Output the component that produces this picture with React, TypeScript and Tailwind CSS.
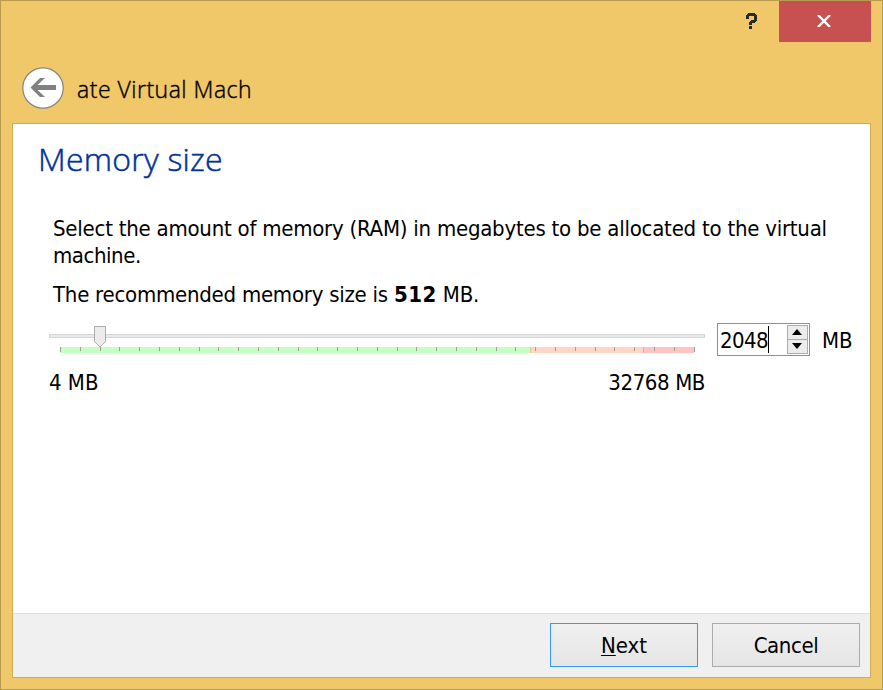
import React from "react";

const TICKS = Array.from({ length: 33 }, (_, i) => Math.round(i * 19.8));

function TitleBar() {
  return (
    <header className="flex h-[122px] flex-col">
      <div className="flex h-[41px] justify-end pr-[11px]">
        <button className="flex w-[56px] items-start justify-center pt-3" aria-label="Help">
          <svg width="11" height="16" viewBox="0 0 11 16" fill="#2a2a2a" shapeRendering="crispEdges">
            <rect x="2" y="0" width="7" height="3" />
            <rect x="1" y="1" width="9" height="2" />
            <rect x="0" y="2" width="3" height="4" />
            <rect x="8" y="2" width="3" height="6" />
            <rect x="5" y="7" width="5" height="2" />
            <rect x="4" y="8" width="5" height="2" />
            <rect x="3" y="9" width="3" height="3" />
            <rect x="3" y="13" width="3" height="3" />
          </svg>
        </button>
        <button className="flex w-[92px] items-start justify-center bg-[#c75050] pt-[14px]" aria-label="Close">
          <svg className="-ml-[2px]" width="14" height="12" viewBox="0 0 14 12" stroke="#fff" strokeWidth="2.4">
            <path d="M1 0L13 12M13 0L1 12" />
          </svg>
        </button>
      </div>
      <div className="flex pl-[21px] pt-[25px]">
        <svg width="42" height="42" viewBox="0 0 42 42">
          <circle cx="21" cy="21" r="20.2" fill="#fff" stroke="#85827c" strokeWidth="1.2" />
          <path d="M8.500 20.500L18 11h5l-7.500 7H34v5H15.500l7.500 7h-5z" fill="#808080" />
        </svg>
        <span className="ml-[13px] mt-[6px] whitespace-nowrap font-['Open_Sans',sans-serif] text-[23px] font-light leading-[32px] tracking-[0.5px] text-black [-webkit-text-stroke:0.4px_#000] [font-stretch:normal]">
          ate Virtual Mach
        </span>
      </div>
    </header>
  );
}

function MemorySlider() {
  return (
    <div className="w-[656px]">
      <svg className="block" width="656" height="32" viewBox="0 0 656 32" shapeRendering="crispEdges">
        <rect x="0.5" y="11.500" width="655" height="3" fill="#e7eaea" stroke="#d6d6d6" />
        <rect x="11" y="24" width="470" height="6" fill="#c3ffc3" />
        <rect x="481" y="24" width="113" height="6" fill="#ffd6c3" />
        <rect x="594" y="24" width="51" height="6" fill="#ffc3c3" />
        <rect x="481" y="24" width="1" height="6" fill="#e1cb91" />
        <rect x="594" y="24" width="1" height="6" fill="#ff9f8c" />
        {TICKS.map((x) => (
          <rect key={x} x={11 + x} y="24" width="1" height={x === 0 || x === 634 ? 5 : 4} fill="#a0a08c" />
        ))}
        <path d="M45.500 3.500h11v15l-5.500 5.500-5.500-5.500z" fill="#ececec" stroke="#acacac" shapeRendering="auto" />
      </svg>
      <div className="mt-[14px] flex justify-between leading-7">
        <span>4 MB</span>
        <span className="tracking-[-0.4px]">32768 MB</span>
      </div>
    </div>
  );
}

function MemoryInput() {
  return (
    <div className="flex h-[33px] w-[93px] border border-[#569de5] bg-white pl-[2px]">
      <span className="mt-[3px] w-[48px] whitespace-nowrap leading-7 tracking-[-0.55px]">2048</span>
      <span className="mt-[2px] h-[27px] w-px bg-black" />
      <div className="ml-[18px] mt-[1px] flex h-[29px] w-[21px] flex-col border border-[#acacac] bg-[#ececec]">
        <button className="flex h-[14px] items-center justify-center border-b border-[#acacac] pb-px pr-px" aria-label="Increase">
          <svg width="10" height="6" viewBox="0 0 10 6"><path d="M0 6L5 0l5 6z" /></svg>
        </button>
        <button className="flex h-[13px] items-center justify-center pb-px pr-px" aria-label="Decrease">
          <svg width="10" height="6" viewBox="0 0 10 6"><path d="M0 0L5 6l5-6z" /></svg>
        </button>
      </div>
    </div>
  );
}

export default function App() {
  return (
    <div className="h-[690px] w-[883px] overflow-hidden border border-[#b89a51] bg-[#f0c869] font-['DejaVu_Sans_Condensed','DejaVu_Sans',sans-serif] text-[22px] text-black [font-stretch:condensed]">
      <TitleBar />
      <main className="ml-[11px] flex h-[555px] w-[859px] flex-col border border-[#cbaa5b] bg-white">
        <section className="h-[489px] pl-9 pt-[14px]">
          <h1 className="-ml-[11px] h-[42px] whitespace-nowrap font-['Open_Sans',sans-serif] text-[32px] font-light leading-[42px] tracking-[0.25px] text-[#003399] [-webkit-text-stroke:0.5px_#003399] [font-stretch:normal]">
            Memory size
          </h1>
          <p className="ml-1 mt-[35px] whitespace-nowrap leading-[27px] tracking-[-0.236px]">
            Select the amount of memory (RAM) in megabytes to be allocated to the virtual
            <br />
            <span className="tracking-[-0.45px]">machine.</span>
          </p>
          <p className="ml-1 mt-3 whitespace-nowrap leading-[27px] tracking-[-0.245px]">
            The recommended memory size is <b className="tracking-[0.5px]">512</b> MB.
          </p>
          <div className="mt-[15px] flex items-start">
            <MemorySlider />
            <div className="ml-3"><MemoryInput /></div>
            <span className="ml-3 mt-1 whitespace-nowrap leading-7">MB</span>
          </div>
        </section>
        <footer className="flex flex-1 justify-end gap-[14px] border-t border-[#dfdfdf] bg-[#f0f0f0] pr-[10px] pt-[9px]">
          <button className="h-[44px] w-[148px] border border-[#3399ff] bg-linear-to-b from-[#f0f0f0] to-[#e5e5e5]">
            <span className="underline decoration-1 underline-offset-2">N</span>ext
          </button>
          <button className="h-[44px] w-[148px] border border-[#acacac] bg-linear-to-b from-[#f0f0f0] to-[#e5e5e5] tracking-[-0.4px]">
            Cancel
          </button>
        </footer>
      </main>
    </div>
  );
}
